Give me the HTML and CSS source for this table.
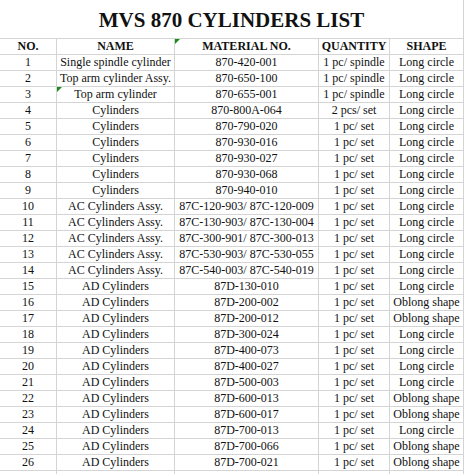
FILE: index.html
```html
<!DOCTYPE html>
<html>
<head>
<meta charset="utf-8">
<link rel="stylesheet" href="styles.css">
</head>
<body>
<div class="sheet">
  <div class="title">MVS 870 CYLINDERS LIST</div>
  <div class="grid">
    <div class="c h">NO.</div><div class="c h">NAME</div><div class="c h flag">MATERIAL NO.</div><div class="c h">QUANTITY</div><div class="c h">SHAPE</div>
    <div class="c">1</div><div class="c">Single spindle cylinder</div><div class="c">870-420-001</div><div class="c">1 pc/ spindle</div><div class="c">Long circle</div>
    <div class="c">2</div><div class="c">Top arm cylinder Assy.</div><div class="c">870-650-100</div><div class="c">1 pc/ spindle</div><div class="c">Long circle</div>
    <div class="c">3</div><div class="c flag">Top arm cylinder</div><div class="c">870-655-001</div><div class="c">1 pc/ spindle</div><div class="c">Long circle</div>
    <div class="c">4</div><div class="c">Cylinders</div><div class="c">870-800A-064</div><div class="c">2 pcs/ set</div><div class="c">Long circle</div>
    <div class="c">5</div><div class="c">Cylinders</div><div class="c">870-790-020</div><div class="c">1 pc/ set</div><div class="c">Long circle</div>
    <div class="c">6</div><div class="c">Cylinders</div><div class="c">870-930-016</div><div class="c">1 pc/ set</div><div class="c">Long circle</div>
    <div class="c">7</div><div class="c">Cylinders</div><div class="c">870-930-027</div><div class="c">1 pc/ set</div><div class="c">Long circle</div>
    <div class="c">8</div><div class="c">Cylinders</div><div class="c">870-930-068</div><div class="c">1 pc/ set</div><div class="c">Long circle</div>
    <div class="c">9</div><div class="c">Cylinders</div><div class="c">870-940-010</div><div class="c">1 pc/ set</div><div class="c">Long circle</div>
    <div class="c">10</div><div class="c">AC Cylinders Assy.</div><div class="c">87C-120-903/ 87C-120-009</div><div class="c">1 pc/ set</div><div class="c">Long circle</div>
    <div class="c">11</div><div class="c">AC Cylinders Assy.</div><div class="c">87C-130-903/ 87C-130-004</div><div class="c">1 pc/ set</div><div class="c">Long circle</div>
    <div class="c">12</div><div class="c">AC Cylinders Assy.</div><div class="c">87C-300-901/ 87C-300-013</div><div class="c">1 pc/ set</div><div class="c">Long circle</div>
    <div class="c">13</div><div class="c">AC Cylinders Assy.</div><div class="c">87C-530-903/ 87C-530-055</div><div class="c">1 pc/ set</div><div class="c">Long circle</div>
    <div class="c">14</div><div class="c">AC Cylinders Assy.</div><div class="c">87C-540-003/ 87C-540-019</div><div class="c">1 pc/ set</div><div class="c">Long circle</div>
    <div class="c">15</div><div class="c">AD Cylinders</div><div class="c">87D-130-010</div><div class="c">1 pc/ set</div><div class="c">Long circle</div>
    <div class="c">16</div><div class="c">AD Cylinders</div><div class="c">87D-200-002</div><div class="c">1 pc/ set</div><div class="c">Oblong shape</div>
    <div class="c">17</div><div class="c">AD Cylinders</div><div class="c">87D-200-012</div><div class="c">1 pc/ set</div><div class="c">Oblong shape</div>
    <div class="c">18</div><div class="c">AD Cylinders</div><div class="c">87D-300-024</div><div class="c">1 pc/ set</div><div class="c">Long circle</div>
    <div class="c">19</div><div class="c">AD Cylinders</div><div class="c">87D-400-073</div><div class="c">1 pc/ set</div><div class="c">Long circle</div>
    <div class="c">20</div><div class="c">AD Cylinders</div><div class="c">87D-400-027</div><div class="c">1 pc/ set</div><div class="c">Long circle</div>
    <div class="c">21</div><div class="c">AD Cylinders</div><div class="c">87D-500-003</div><div class="c">1 pc/ set</div><div class="c">Long circle</div>
    <div class="c">22</div><div class="c">AD Cylinders</div><div class="c">87D-600-013</div><div class="c">1 pc/ set</div><div class="c">Oblong shape</div>
    <div class="c">23</div><div class="c">AD Cylinders</div><div class="c">87D-600-017</div><div class="c">1 pc/ set</div><div class="c">Oblong shape</div>
    <div class="c">24</div><div class="c">AD Cylinders</div><div class="c">87D-700-013</div><div class="c">1 pc/ set</div><div class="c">Long circle</div>
    <div class="c">25</div><div class="c">AD Cylinders</div><div class="c">87D-700-066</div><div class="c">1 pc/ set</div><div class="c">Oblong shape</div>
    <div class="c">26</div><div class="c">AD Cylinders</div><div class="c">87D-700-021</div><div class="c">1 pc/ set</div><div class="c">Oblong shape</div>
    <div class="c"></div><div class="c"></div><div class="c"></div><div class="c"></div><div class="c"></div>
  </div>
</div>
</body>
</html>
```

FILE: styles.css
```css
html, body {
  margin: 0;
  padding: 0;
  background: #ffffff;
}

body {
  font-family: "Liberation Serif", "Times New Roman", serif;
  color: #111111;
  overflow: hidden;
}

.sheet {
  width: 464px;
}

.title {
  box-sizing: border-box;
  height: 38px;
  padding-top: 2px;
  line-height: 36px;
  font-size: 21px;
  font-weight: bold;
  text-align: center;
  border-right: 1px solid #d4d4d4;
  white-space: nowrap;
}

.grid {
  display: grid;
  grid-template-columns: 57px 118px 144px 71px 74px;
  grid-auto-rows: 16px;
  border-top: 1px solid #d4d4d4;
}

.c {
  position: relative;
  box-sizing: border-box;
  height: 16px;
  border-right: 1px solid #d4d4d4;
  border-bottom: 1px solid #d4d4d4;
  font-size: 12px;
  line-height: 15px;
  text-align: center;
  white-space: nowrap;
  display: flex;
  justify-content: center;
}

.h {
  font-weight: bold;
}

.flag::before {
  content: "";
  position: absolute;
  left: 0;
  top: 0;
  width: 0;
  height: 0;
  border-top: 5px solid #1a8c1a;
  border-right: 5px solid transparent;
}
```
